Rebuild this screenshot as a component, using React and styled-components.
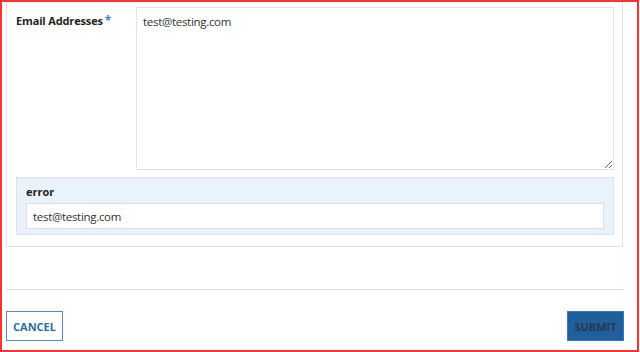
import React from "react";
import styled, { createGlobalStyle } from "styled-components";

const Global = createGlobalStyle`
  html, body { margin: 0; padding: 0; background: #ffffff; }
  body { font-family: "Open Sans", "Liberation Sans", sans-serif; color: #333; }
  * { box-sizing: border-box; }
`;

const Frame = styled.div`
  width: 639px;
  height: 352px;
  border: 2px solid #ff3131;
  overflow: hidden;
  display: flex;
  flex-direction: column;
`;

const Panel = styled.div`
  margin-left: 4px;
  width: 617px;
  border: 1px solid #e2e2e2;
  border-top: none;
  padding: 5px 8px 11px 9px;
  display: flex;
  flex-direction: column;
  gap: 7px;
`;

const FieldRow = styled.div`
  display: grid;
  grid-template-columns: 120px 1fr;
  align-items: start;
`;

const Label = styled.label`
  font-weight: 700;
  font-size: 11px;
  letter-spacing: -0.15px;
  color: #222;
  padding-top: 6px;
  line-height: 16px;
`;

const Required = styled.span`
  color: #4a86c5;
  margin-left: 2px;
  font-size: 12px;
`;

const TextArea = styled.textarea`
  width: 478px;
  height: 163px;
  border: 1px solid #e3e3e3;
  padding: 5px 6px;
  font-family: inherit;
  font-size: 11.5px;
  letter-spacing: -0.3px;
  line-height: 17px;
  color: #333;
  resize: both;
  outline: none;
  margin: 0;
`;

const ErrorBox = styled.div`
  border: 1px solid #d9e1ea;
  background: #eaf2fd;
  padding: 6px 9px 5px 9px;
  display: flex;
  flex-direction: column;
  gap: 3px;
`;

const ErrorTitle = styled.div`
  font-weight: 700;
  font-size: 11px;
  line-height: 16px;
  color: #222;
`;

const Input = styled.input`
  width: 578px;
  height: 26px;
  border: 1px solid #dedede;
  background: #fff;
  padding: 0 6px;
  font-family: inherit;
  font-size: 11.5px;
  letter-spacing: -0.3px;
  color: #333;
  outline: none;
  margin: 0;
`;

const Separator = styled.hr`
  margin: 42px 0 0 4px;
  width: 617px;
  border: none;
  border-top: 1px solid #dddddd;
  height: 0;
`;

const Actions = styled.div`
  display: flex;
  justify-content: space-between;
  margin: 21px 0 0 4px;
  width: 618px;
`;

const Button = styled.button`
  width: 57px;
  height: 30px;
  font-family: inherit;
  font-weight: 700;
  font-size: 11px;
  text-transform: uppercase;
  padding: 0;
  border: 1px solid ${(p) => (p.$primary ? "#3b78b3" : "#5a8cc0")};
  background: ${(p) => (p.$primary ? "#1f609c" : "#ffffff")};
  color: ${(p) => (p.$primary ? "#26394e" : "#2e6aa3")};
  cursor: pointer;
`;

export default function App() {
  return (
    <>
      <Global />
      <Frame>
        <Panel>
          <FieldRow>
            <Label>
              Email Addresses<Required>*</Required>
            </Label>
            <TextArea defaultValue={"test@testing.com\n"} />
          </FieldRow>
          <ErrorBox>
            <ErrorTitle>error</ErrorTitle>
            <Input defaultValue="test@testing.com" />
          </ErrorBox>
        </Panel>
        <Separator />
        <Actions>
          <Button>Cancel</Button>
          <Button $primary>Submit</Button>
        </Actions>
      </Frame>
    </>
  );
}
